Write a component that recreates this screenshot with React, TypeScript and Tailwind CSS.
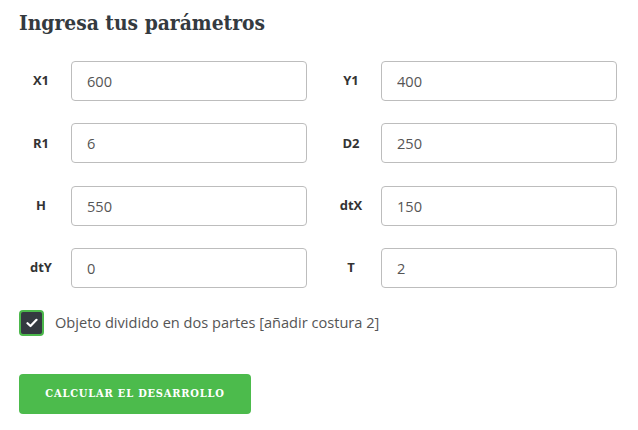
import React from "react";

type Field = { label: string; value: string };

const rows: [Field, Field][] = [
  [{ label: "X1", value: "600" }, { label: "Y1", value: "400" }],
  [{ label: "R1", value: "6" }, { label: "D2", value: "250" }],
  [{ label: "H", value: "550" }, { label: "dtX", value: "150" }],
  [{ label: "dtY", value: "0" }, { label: "T", value: "2" }],
];

const slab = '"DejaVu Serif Condensed", "DejaVu Serif", serif';

function ParamInput({ field }: { field: Field }) {
  return (
    <div className="flex items-center gap-[8px]">
      <label className="w-[44px] text-center text-[13px] font-bold text-[#333]">
        {field.label}
      </label>
      <input
        defaultValue={field.value}
        className="h-[40px] w-[236px] rounded-[4px] border border-[#bdbdbd] bg-white px-[15px] text-[14.6px] text-[#555] outline-none"
      />
    </div>
  );
}

export default function App() {
  return (
    <div
      className="min-h-[430px] w-[638px] bg-white px-[19px] pt-[8px]"
      style={{ fontFamily: '"Open Sans", sans-serif' }}
    >
      <h2
        className="text-[20.8px] font-bold leading-[30px] text-[#343a40]"
        style={{ fontFamily: slab, fontStretch: "condensed" }}
      >
        Ingresa tus parámetros
      </h2>

      <div className="mt-[23px] flex flex-col gap-[22.4px]">
        {rows.map(([a, b]) => (
          <div key={a.label} className="flex gap-[22px]">
            <ParamInput field={a} />
            <ParamInput field={b} />
          </div>
        ))}
      </div>

      <label className="mt-[22px] flex items-center gap-[11px]">
        <span className="flex h-[26px] w-[25px] items-center justify-center rounded-[4px] border-2 border-[#4cb84c] bg-[#343a40]">
          <svg width="12" height="10" viewBox="0 0 12 10" fill="none">
            <path
              d="M1.5 5.2 L4.5 8 L10.5 1.8"
              stroke="white"
              strokeWidth="2.2"
              strokeLinecap="round"
              strokeLinejoin="round"
            />
          </svg>
        </span>
        <span className="text-[14.6px] text-[#555]">
          Objeto dividido en dos partes [añadir costura 2]
        </span>
      </label>

      <button
        className="mt-[38px] h-[40px] w-[232px] rounded-[4px] bg-[#4cbb4c] text-[11px] font-bold uppercase tracking-[0.8px] text-white"
        style={{ fontFamily: slab, fontStretch: "condensed" }}
      >
        Calcular el desarrollo
      </button>
    </div>
  );
}
